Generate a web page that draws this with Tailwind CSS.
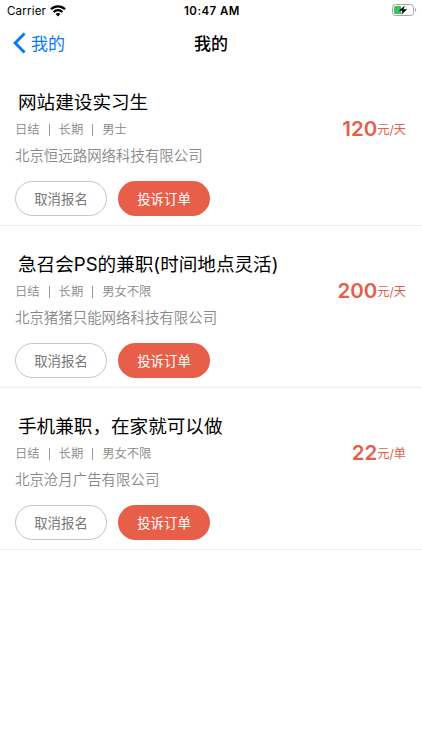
<!DOCTYPE html>
<html lang="zh-CN">
<head>
    <meta charset="UTF-8">
    <meta name="viewport" content="width=device-width, initial-scale=1.0">
    <title>我的</title>
    <script src="https://cdn.jsdelivr.net/npm/@tailwindcss/browser@4"></script>
</head>
<body class="bg-white min-h-screen font-[Inter,'Noto_Sans_CJK_SC',sans-serif] whitespace-nowrap">

    <!-- Status bar -->
    <div class="grid grid-cols-3 items-center h-[22px] pl-[7px] pr-[5px] text-[11.5px] text-black">
        <div class="flex items-center gap-1 pt-px">
            <span class="tracking-[.2px]">Carrier</span>
            <svg class="w-4 h-3 mb-px" viewBox="0 0 16 12" fill="none" stroke="#000" stroke-width="2.300">
                <path d="M1 4.200C5 .3 11 .3 15 4.200"/>
                <path d="M3.600 7C6.200 4.600 9.800 4.600 12.400 7"/>
                <path d="M5.600 9C7 7.700 9 7.700 10.400 9L8 11.500z" fill="#000" stroke="none"/>
            </svg>
        </div>
        <span class="text-center font-semibold pt-px tracking-[.45px]">10:47 AM</span>
        <svg class="w-[25px] h-3 mb-0.5 justify-self-end" viewBox="0 0 25 12">
            <rect x=".5" y=".5" width="21" height="11" rx="3" fill="#fff" stroke="#a6a6a6"/>
            <path d="M3.500 2H9v8H3.500A1.500 1.500 0 0 1 2 8.500V3.500A1.500 1.500 0 0 1 3.500 2z" fill="#35c759"/>
            <path d="M12.800 1.500L6.800 6.700h3.700L9.200 10.800L15.200 5.300h-3.700z" fill="#000"/>
            <path d="M23 4v4c1.600-.6 1.600-3.400 0-4z" fill="#a6a6a6"/>
        </svg>
    </div>

    <!-- Nav bar -->
    <div class="grid grid-cols-3 items-center h-[42px] px-[13px] text-[17px]">
        <a href="#" class="flex items-center gap-[5px] text-[#0b7bf5]">
            <svg class="w-[13px] h-[22px]" viewBox="0 0 13 22" fill="none" stroke="currentColor" stroke-width="3">
                <path d="M11.500 1.500L2.200 11L11.500 20.500"/>
            </svg>
            <span class="pt-[3px]">我的</span>
        </a>
        <h1 class="text-center font-medium text-black pt-[3px]">我的</h1>
    </div>

    <!-- Orders -->
    <ul>
        <li class="h-[162px] pt-[23px] pl-[15px] pr-4 border-b border-[#ececec]">
            <h2 class="pl-[3px] text-[18.600px] leading-[30px] text-black">网站建设实习生</h2>
            <div class="flex items-center justify-between h-[25px]">
                <div class="flex items-center gap-[9px] pt-0.5 text-[12.300px] font-[350] text-[#888]">
                    <span>日结</span><i class="w-px h-3 mb-0.5 bg-[#999]"></i><span>长期</span><i class="w-px h-3 mb-0.5 bg-[#999]"></i><span>男士</span>
                </div>
                <div class="flex items-center pt-0.5 text-[#e5604b]"><b class="mb-0.5 text-[20.500px] font-semibold">120</b><span class="text-[12.200px]">元/天</span></div>
            </div>
            <p class="h-[27px] text-[14.450px] leading-[28px] font-[350] text-[#888]">北京恒远路网络科技有限公司</p>
            <div class="flex gap-[11px] mt-3">
                <button class="w-[92px] h-[35px] rounded-full border border-[#c4c4c4] pt-px text-[13.400px] text-[#777]">取消报名</button>
                <button class="w-[92px] h-[35px] rounded-full bg-[#e75f49] pt-px text-[13.400px] text-white">投诉订单</button>
            </div>
        </li>
        <li class="h-[162px] pt-[23px] pl-[15px] pr-4 border-b border-[#ececec]">
            <h2 class="pl-[3px] text-[18.600px] leading-[30px] text-black">急召会PS的兼职(时间地点灵活)</h2>
            <div class="flex items-center justify-between h-[25px]">
                <div class="flex items-center gap-[9px] pt-0.5 text-[12.300px] font-[350] text-[#888]">
                    <span>日结</span><i class="w-px h-3 mb-0.5 bg-[#999]"></i><span>长期</span><i class="w-px h-3 mb-0.5 bg-[#999]"></i><span>男女不限</span>
                </div>
                <div class="flex items-center pt-0.5 text-[#e5604b]"><b class="mb-0.5 text-[20.500px] font-semibold">200</b><span class="text-[12.200px]">元/天</span></div>
            </div>
            <p class="h-[27px] text-[14.450px] leading-[28px] font-[350] text-[#888]">北京猪猪只能网络科技有限公司</p>
            <div class="flex gap-[11px] mt-3">
                <button class="w-[92px] h-[35px] rounded-full border border-[#c4c4c4] pt-px text-[13.400px] text-[#777]">取消报名</button>
                <button class="w-[92px] h-[35px] rounded-full bg-[#e75f49] pt-px text-[13.400px] text-white">投诉订单</button>
            </div>
        </li>
        <li class="h-[162px] pt-[23px] pl-[15px] pr-4 border-b border-[#ececec]">
            <h2 class="pl-[3px] text-[18.600px] leading-[30px] text-black">手机兼职，在家就可以做</h2>
            <div class="flex items-center justify-between h-[25px]">
                <div class="flex items-center gap-[9px] pt-0.5 text-[12.300px] font-[350] text-[#888]">
                    <span>日结</span><i class="w-px h-3 mb-0.5 bg-[#999]"></i><span>长期</span><i class="w-px h-3 mb-0.5 bg-[#999]"></i><span>男女不限</span>
                </div>
                <div class="flex items-center pt-0.5 text-[#e5604b]"><b class="mb-0.5 text-[20.500px] font-semibold">22</b><span class="text-[12.200px]">元/单</span></div>
            </div>
            <p class="h-[27px] text-[14.450px] leading-[28px] font-[350] text-[#888]">北京沧月广告有限公司</p>
            <div class="flex gap-[11px] mt-3">
                <button class="w-[92px] h-[35px] rounded-full border border-[#c4c4c4] pt-px text-[13.400px] text-[#777]">取消报名</button>
                <button class="w-[92px] h-[35px] rounded-full bg-[#e75f49] pt-px text-[13.400px] text-white">投诉订单</button>
            </div>
        </li>
    </ul>
</body>
</html>
